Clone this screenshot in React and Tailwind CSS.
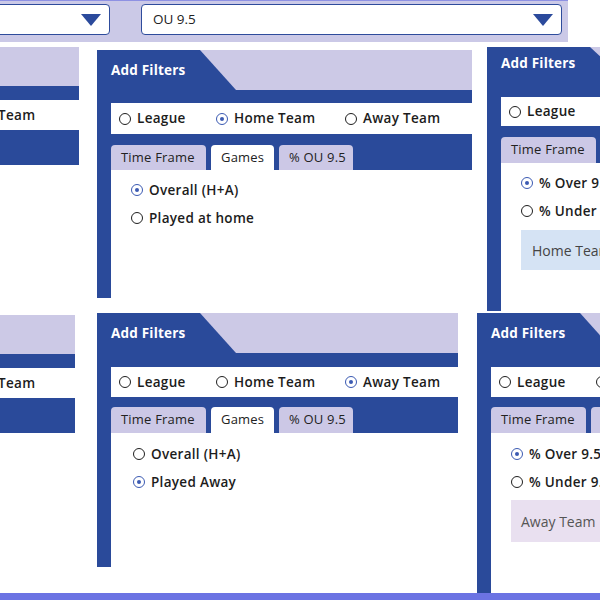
import React from 'react';

const BLUE = 'bg-[#2a4a9a]';

function Radio({ checked }) {
  return checked ? (
    <span className="w-[12px] h-[12px] rounded-full border-[1.5px] border-[#3b5ab2] flex items-center justify-center shrink-0">
      <span className="w-[4px] h-[4px] rounded-full bg-[#3b5ab2]" />
    </span>
  ) : (
    <span className="w-[12px] h-[12px] rounded-full border-[1.5px] border-[#1f1f1f] shrink-0" />
  );
}

function Option({ label, checked, className = '' }) {
  return (
    <div className={`flex items-center gap-[6px] h-[20px] ${className}`}>
      <Radio checked={checked} />
      <span className="font-semibold text-[13.5px] tracking-[0.3px] text-[#1c1c1c] whitespace-nowrap">{label}</span>
    </div>
  );
}

function Tab({ label, active, className = '' }) {
  return (
    <div
      className={`h-full rounded-t-[4px] flex items-center px-[10px] text-[13px] tracking-[0.2px] text-[#222] whitespace-nowrap ${
        active ? 'bg-white' : 'bg-[#ccc8e6]'
      } ${className}`}
    >
      {label}
    </div>
  );
}

function Panel({ box, headH, gapTop, rowH, tabsGap, tabH, team, tab, children }) {
  return (
    <div className={`absolute flex flex-col ${box}`}>
      {/* header with slanted tab */}
      <div className={`flex bg-[#ccc9e6] shrink-0 ${headH}`}>
        <div
          className={`w-[139px] ${BLUE} flex items-center pl-[14px] text-white font-bold text-[13.5px] tracking-[0.2px]`}
          style={{ clipPath: 'polygon(0 0, 103px 0, 100% 100%, 0 100%)' }}
        >
          Add Filters
        </div>
      </div>

      <div className={`${BLUE} pl-[14px] shrink-0 ${gapTop}`}>
        <div className={`bg-white flex items-center pl-[8px] ${rowH}`}>
          <Option label="League" checked={team === 'league'} className="w-[97px]" />
          <Option label="Home Team" checked={team === 'home'} className="w-[129px]" />
          <Option label="Away Team" checked={team === 'away'} />
        </div>
        <div className={`flex gap-[5px] ${tabsGap} ${tabH}`}>
          <Tab label="Time Frame" active={tab === 'time'} className="w-[95px]" />
          <Tab label="Games" active={tab === 'games'} className="w-[63px]" />
          <Tab label="% OU 9.5" active={tab === 'ou'} className="w-[74px]" />
        </div>
      </div>

      <div className="flex flex-1">
        <div className={`w-[14px] ${BLUE}`} />
        <div className="flex-1 bg-white">{children}</div>
      </div>
    </div>
  );
}

function Fragment({ box }) {
  return (
    <div className={`absolute flex flex-col overflow-hidden ${box}`}>
      <div className="h-[39px] bg-[#ccc9e6]" />
      <div className={`h-[14px] ${BLUE}`} />
      <div className="h-[30px] bg-white flex items-center">
        <span className="ml-[-42px] font-semibold text-[13.5px] tracking-[0.3px] text-[#1c1c1c] whitespace-nowrap">Away Team</span>
      </div>
      <div className={`flex-1 ${BLUE}`} />
    </div>
  );
}

function Dropdown({ box, text }) {
  return (
    <div className={`absolute h-[31px] bg-white border-[1.5px] border-[#2e4c9c] rounded-[4px] flex items-center ${box}`}>
      <span className="pl-[11px] text-[13.5px] text-[#222]">{text}</span>
      <svg className="ml-auto mr-[8px]" width="20" height="12" viewBox="0 0 20 12">
        <path d="M0 0 H20 L10 12 Z" fill="#2b4a9c" />
      </svg>
    </div>
  );
}

export default function App() {
  return (
    <div
      className="relative w-[600px] h-[600px] overflow-hidden bg-white"
      style={{ fontFamily: '"Open Sans", "DejaVu Sans", sans-serif' }}
    >
      {/* top band with selects */}
      <div className="absolute left-0 top-0 w-[568px] h-[42px] bg-[#cbc9e7] border-t border-[#8e91e3]" />
      <Dropdown box="left-[-200px] top-[4px] w-[310px]" text="" />
      <Dropdown box="left-[141px] top-[4px] w-[421px]" text="OU 9.5" />

      {/* left fragments */}
      <Fragment box="left-0 top-[47px] w-[79px] h-[118px]" />
      <Fragment box="left-0 top-[315px] w-[75px] h-[118px]" />

      {/* top middle */}
      <Panel
        box="left-[97px] top-[50px] w-[375px] h-[248px]"
        headH="h-[40px]"
        gapTop="pt-[13px]"
        rowH="h-[31px]"
        tabsGap="mt-[11px]"
        tabH="h-[25px]"
        team="home"
        tab="games"
      >
        <div className="pl-[20px] pt-[10px] flex flex-col gap-[8px]">
          <Option label="Overall (H+A)" checked />
          <Option label="Played at home" />
        </div>
      </Panel>

      {/* top right */}
      <Panel
        box="left-[487px] top-[47px] w-[375px] h-[264px]"
        headH="h-[33px]"
        gapTop="pt-[17px]"
        rowH="h-[29px]"
        tabsGap="mt-[11px]"
        tabH="h-[26px]"
        team="home"
        tab="ou"
      >
        <div className="pl-[20px] pt-[10px] flex flex-col gap-[8px]">
          <Option label="% Over 9.5" checked />
          <Option label="% Under 9.5" />
          <div className="mt-[1px] h-[40px] bg-[#d5e3f4] flex items-center pl-[11px] text-[14px] text-[#444]">
            Home Team
          </div>
        </div>
      </Panel>

      {/* bottom middle */}
      <Panel
        box="left-[97px] top-[313px] w-[361px] h-[254px]"
        headH="h-[40px]"
        gapTop="pt-[14px]"
        rowH="h-[30px]"
        tabsGap="mt-[10px]"
        tabH="h-[26px]"
        team="away"
        tab="games"
      >
        <div className="pl-[22px] pt-[11px] flex flex-col gap-[8px]">
          <Option label="Overall (H+A)" />
          <Option label="Played Away" checked />
        </div>
      </Panel>

      {/* bottom right */}
      <Panel
        box="left-[477px] top-[313px] w-[375px] h-[280px]"
        headH="h-[40px]"
        gapTop="pt-[14px]"
        rowH="h-[30px]"
        tabsGap="mt-[10px]"
        tabH="h-[26px]"
        team="away"
        tab="ou"
      >
        <div className="pl-[20px] pt-[11px] flex flex-col gap-[8px]">
          <Option label="% Over 9.5" checked />
          <Option label="% Under 9.5" />
          <div className="h-[42px] bg-[#e9e0f0] flex items-center pl-[10px] text-[14px] text-[#555]">
            Away Team
          </div>
        </div>
      </Panel>

      {/* bottom bar */}
      <div className="absolute left-0 bottom-0 w-full h-[7px] bg-[#6b73e3]" />
    </div>
  );
}
